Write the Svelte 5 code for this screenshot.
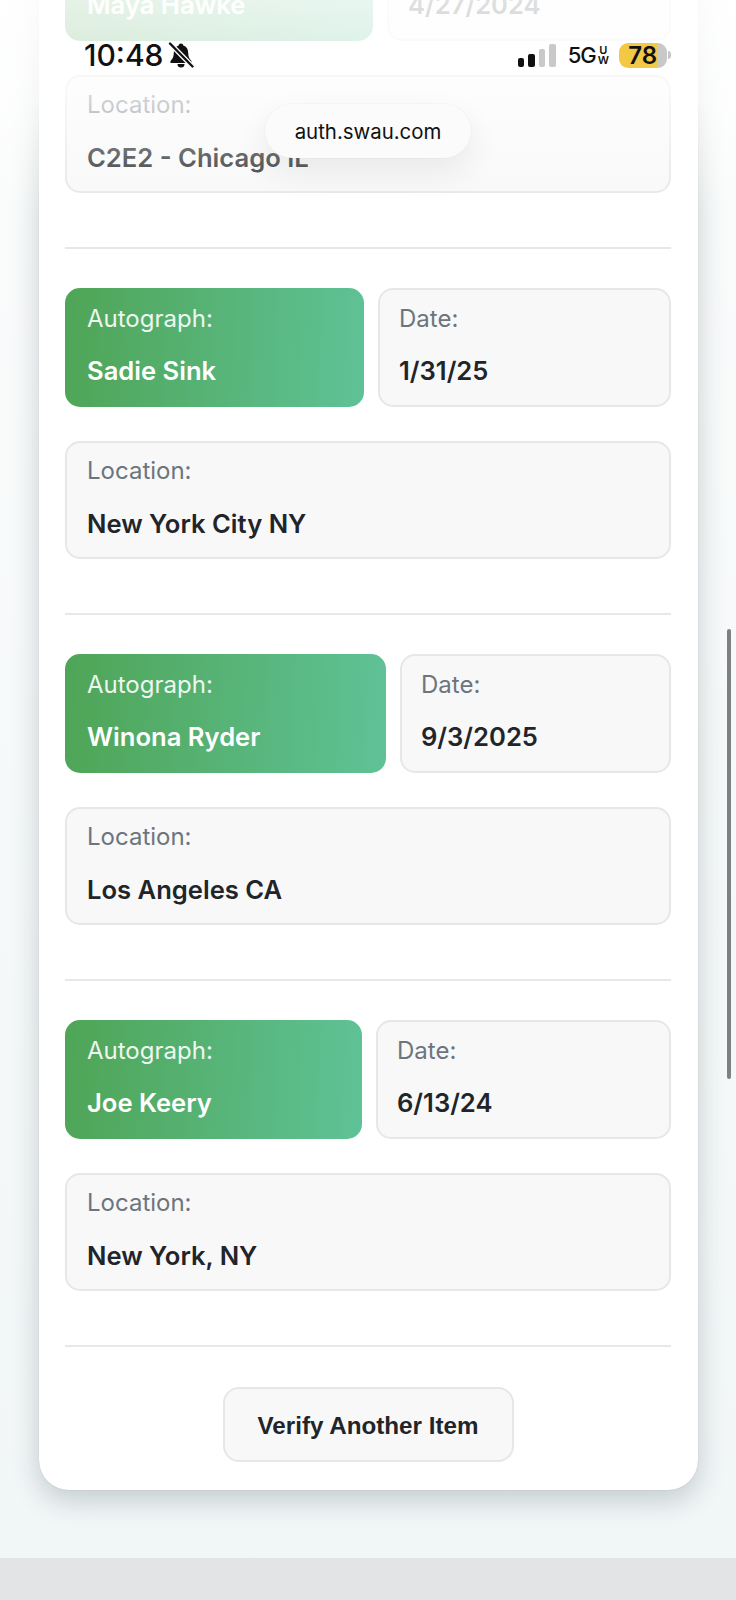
<script lang="ts">
  const items = [
    { name: 'Maya Hawke', date: '4/27/2024', location: 'C2E2 - Chicago IL', nameWidth: 308 },
    { name: 'Sadie Sink', date: '1/31/25', location: 'New York City NY', nameWidth: 299 },
    { name: 'Winona Ryder', date: '9/3/2025', location: 'Los Angeles CA', nameWidth: 321 },
    { name: 'Joe Keery', date: '6/13/24', location: 'New York, NY', nameWidth: 297 }
  ];
</script>

<div class="page">
  <main class="card">
    {#each items as item}
      <section class="item">
        <div class="row" style="grid-template-columns: {item.nameWidth}px 1fr">
          <div class="box green">
            <span class="label">Autograph:</span>
            <span class="value">{item.name}</span>
          </div>
          <div class="box">
            <span class="label">Date:</span>
            <span class="value">{item.date}</span>
          </div>
        </div>
        <div class="box">
          <span class="label">Location:</span>
          <span class="value">{item.location}</span>
        </div>
      </section>
    {/each}
    <button type="button" class="verify">Verify Another Item</button>
  </main>
  <div class="band"></div>

  <div class="fade"></div>
  <div class="scrollbar"></div>

  <div class="status">
    <div class="time">
      10:48
      <svg width="26" height="26" viewBox="0 0 26 26" aria-hidden="true">
        <path d="M13 1.500c-1.300 0-2.200.9-2.300 2.100C7.400 4.500 5.800 7.400 5.800 10.800c0 3.600-1 6.200-3.300 8.200v2h21v-2c-2.300-2-3.300-4.600-3.300-8.200 0-3.400-1.600-6.300-4.900-7.200-.1-1.200-1-2.100-2.300-2.100z" fill="#111"/>
        <path d="M9.500 22h7a3.500 3.500 0 0 1-7 0z" fill="#111"/>
        <path d="M2 1.500 24.500 24.500" stroke="#fbfcfc" stroke-width="5"/>
        <path d="M2 1.500 24.500 24.500" stroke="#111" stroke-width="2.400" stroke-linecap="round"/>
      </svg>
    </div>
    <div class="indicators">
      <div class="signal">
        <i class="on b1"></i>
        <i class="on b2"></i>
        <i class="b3"></i>
        <i class="b4"></i>
      </div>
      <div class="network">
        5G<span class="uw"><span>U</span><span>W</span></span>
      </div>
      <div class="battery"><span class="level">78</span></div>
      <div class="nub"></div>
    </div>
  </div>

  <div class="toast">auth.swau.com</div>
</div>

<style>
  :global(body) {
    margin: 0;
  }
  .page {
    position: relative;
    width: 736px;
    height: 1600px;
    overflow: hidden;
    background: linear-gradient(180deg, #fbfcfc 0%, #f1f6f7 100%);
    font-family: Inter, "Liberation Sans", sans-serif;
  }
  .card {
    box-sizing: border-box;
    width: 659px;
    height: 1568.500px;
    margin: -78.500px 0 0 39px;
    padding: 0 27px 0 26px;
    background: #fff;
    border-radius: 0 0 30px 30px;
    box-shadow: 0 0 1px rgba(0, 0, 0, 0.2), 0 10px 28px rgba(30, 50, 55, 0.22);
    display: flex;
    flex-direction: column;
  }
  .item {
    display: flex;
    flex-direction: column;
    gap: 34px;
    padding-bottom: 54px;
    margin-bottom: 39.300px;
    border-bottom: 2px solid #e6e8ea;
    flex: none;
  }
  .row {
    display: grid;
    gap: 14px;
  }
  .box {
    box-sizing: border-box;
    height: 118px;
    padding: 13px 20px 0;
    background: #f8f8f9;
    border: 2px solid #e6e7e9;
    border-radius: 15px;
    display: flex;
    flex-direction: column;
    gap: 23px;
  }
  .row .box {
    height: 119px;
    padding: 14px 19px 0;
    gap: 22px;
  }
  .row .green {
    background: linear-gradient(93deg, #4fa556 0%, #5fc297 100%);
    border: none;
    padding: 16px 22px 0;
  }
  .label {
    font-size: 24px;
    line-height: 29px;
    color: #6c757d;
  }
  .value {
    font-size: 25.600px;
    line-height: 32px;
    font-weight: 600;
    color: #212529;
  }
  .green .label,
  .green .value {
    color: #fff;
  }
  .green .label {
    opacity: 0.9;
  }
  .verify {
    align-self: center;
    width: 291px;
    height: 75px;
    padding: 3px 0 0;
    background: #f8f8f9;
    border: 2px solid #e6e7e9;
    border-radius: 16px;
    font-family: "Liberation Sans", Arial, sans-serif;
    font-size: 24.200px;
    font-weight: 700;
    color: #212529;
  }
  .band {
    position: absolute;
    left: 0;
    right: 0;
    bottom: 0;
    height: 42px;
    background: #e2e4e5;
  }
  .fade {
    position: absolute;
    top: 0;
    left: 0;
    right: 0;
    height: 215px;
    background: linear-gradient(180deg, rgba(255, 255, 255, 0.86) 0%, rgba(255, 255, 255, 0.8) 40px, rgba(255, 255, 255, 0.68) 100px, rgba(255, 255, 255, 0.3) 157px, rgba(255, 255, 255, 0) 215px);
  }
  .scrollbar {
    position: absolute;
    left: 727px;
    top: 629px;
    width: 4px;
    height: 450px;
    border-radius: 2px;
    background: #808080;
  }
  .status {
    position: absolute;
    top: 40px;
    left: 84px;
    right: 65px;
    height: 30px;
    display: flex;
    justify-content: space-between;
    align-items: center;
    color: #111;
  }
  .time {
    display: flex;
    align-items: center;
    gap: 5px;
    font-size: 30px;
    font-weight: 500;
    line-height: 30px;
  }
  .indicators {
    display: flex;
    align-items: center;
    position: relative;
  }
  .signal {
    display: flex;
    align-items: flex-end;
    gap: 4px;
    height: 23px;
    margin-right: 12px;
  }
  .signal i {
    width: 6.500px;
    border-radius: 2px;
    background: #c9c9c9;
  }
  .signal i.on {
    background: #111;
  }
  .b1 { height: 9px; }
  .b2 { height: 13px; }
  .b3 { height: 18px; }
  .b4 { height: 23px; }
  .network {
    display: flex;
    align-items: center;
    gap: 2px;
    font-size: 22px;
    font-weight: 500;
    letter-spacing: -1px;
    margin-right: 10px;
  }
  .uw {
    display: flex;
    flex-direction: column;
    font-size: 11px;
    line-height: 10px;
    font-weight: 600;
    letter-spacing: 0;
    text-align: center;
  }
  .battery {
    box-sizing: border-box;
    width: 48px;
    height: 25px;
    border-radius: 9px;
    overflow: hidden;
    background: linear-gradient(90deg, #f3c845 0, #f3c845 38px, #c8c8c8 38px);
  }
  .level {
    display: block;
    width: 38px;
    text-align: right;
    font-size: 24px;
    line-height: 25px;
    font-weight: 600;
  }
  .nub {
    width: 3px;
    height: 8px;
    margin-left: 1px;
    border-radius: 0 3px 3px 0;
    background: #c8c8c8;
  }
  .toast {
    position: absolute;
    top: 104px;
    left: 265px;
    width: 206px;
    height: 54px;
    display: flex;
    align-items: center;
    justify-content: center;
    background: #fbfbfb;
    border-radius: 27px;
    box-shadow: 0 0 0 1px rgba(0, 0, 0, 0.02), 0 14px 34px rgba(0, 0, 0, 0.07);
    font-size: 20.400px;
    color: #111;
  }
</style>
